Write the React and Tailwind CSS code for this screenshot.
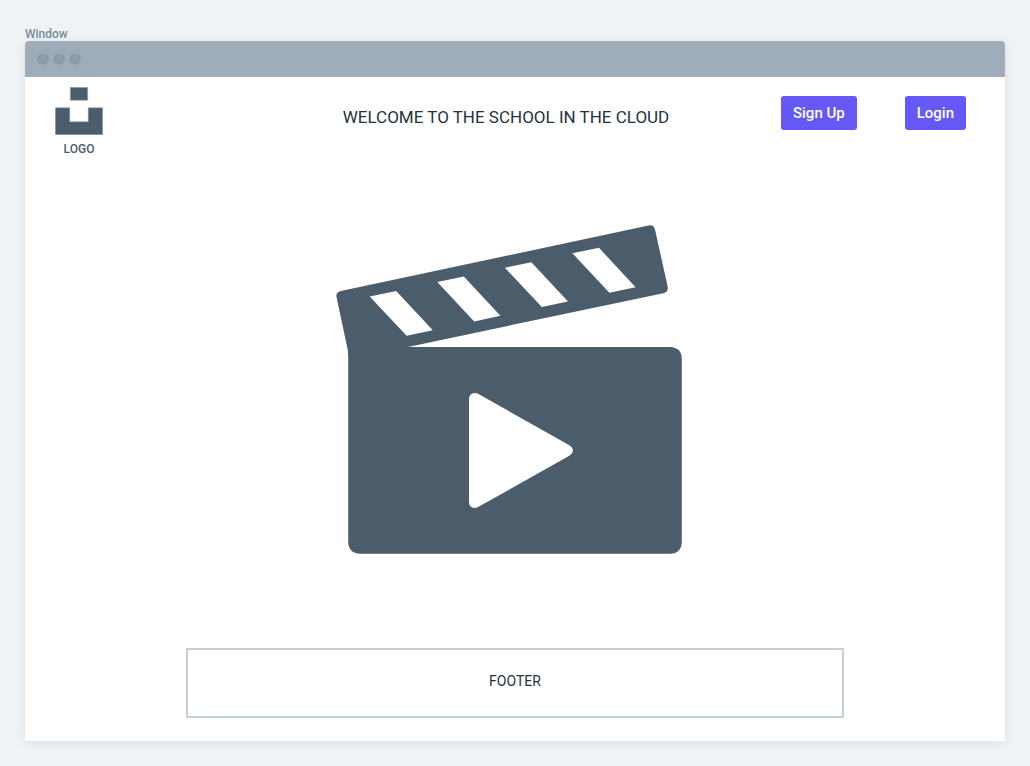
function Logo() {
  return (
    <a href="#home" className="flex w-[66px] flex-col items-center gap-1.5 text-xs leading-4 font-medium text-[#4b5d6b]">
      <svg viewBox="0 0 48 48" className="size-12" fill="#4b5d6b" stroke="#9fadb9" strokeWidth="0.6" aria-hidden="true">
        <path d="M15.3 .3h17.4v13H15.3z" />
        <path d="M.3 20.7h14.5v14h18.4v-14h14.5v27H.3z" />
      </svg>
      <span>LOGO</span>
    </a>
  );
}

// Each stripe repeats the first one, shifted along the arm.
const STRIPES = [0, 1, 2, 3];

function Clapperboard() {
  return (
    <svg viewBox="336 225 358 329" className="w-[358px] max-w-full" fill="#4b5d6b" role="img" aria-label="Play video">
      <path d="M348.2 352 L336.6 297.5 Q335.3 292.4 340.8 291.1 L648.5 225.4 Q653.8 224.4 655 229.5 L667.7 286.8 Q668.4 292 663.3 293.2 L408 346.9 L408 356 H348.2z" />
      <path d="M348.2 347 H670 Q681.8 347.6 681.8 359 V542 Q681.3 553.5 670 553.8 H360 Q348.6 553.3 348.2 542z" />
      {STRIPES.map((n) => (
        <path
          key={n}
          fill="#fff"
          d="M369.7 296.4 L396.2 290.9 L432.8 330.2 L406.6 335.8z"
          transform={`translate(${n * 67.6} ${n * -14.35})`}
        />
      ))}
      <path
        fill="#fff"
        d="M469 399 Q469.2 393.3 474.5 393 Q476.5 393 478.5 394.1 L569.8 445.4 Q572.8 447.4 572.9 450.5 Q572.8 453.7 569.8 455.6 L478.5 506.8 Q476.5 508 474.5 508 Q469.2 507.7 469 502z"
      />
    </svg>
  );
}

function ActionButton({ children }) {
  return (
    <button
      type="button"
      className="h-[34px] cursor-pointer rounded-[3px] bg-[#6558f5] px-3 text-[15px] leading-5 font-medium whitespace-nowrap text-white"
    >
      {children}
    </button>
  );
}

export default function App() {
  return (
    <div className="flex min-h-screen flex-col bg-[#eff3f6] px-[25px] pt-[27px] pb-[25px] font-['Roboto',sans-serif]">
      <p className="text-xs leading-[14px] font-medium text-[#7b8b99]">Window</p>
      <div className="flex grow flex-col rounded-t bg-white shadow-[0_2px_12px_rgba(0,0,0,0.08)]">
        <div className="flex h-9 items-center gap-1 rounded-t bg-[#9eadb9] px-3">
          <span className="size-3 rounded-full bg-[#8e9dab]" />
          <span className="size-3 rounded-full bg-[#8e9dab]" />
          <span className="size-3 rounded-full bg-[#8e9dab]" />
        </div>
        <header className="grid grid-cols-[1fr_auto_1fr] items-center pt-2.5 pr-[39px] pl-[21px]">
          <Logo />
          <h1 className="pb-2.5 text-center text-[17px] leading-6 text-[#24343f]">
            WELCOME TO THE SCHOOL IN THE CLOUD
          </h1>
          <div className="flex justify-end gap-12 pb-[18px]">
            <ActionButton>Sign Up</ActionButton>
            <ActionButton>Login</ActionButton>
          </div>
        </header>
        <main className="flex grow items-center justify-center px-6 pt-2 pb-[34px]">
          <Clapperboard />
        </main>
        <footer className="mx-auto mb-[23px] flex h-[70px] w-full max-w-[658px] items-center justify-center border-2 border-[#c3cfd9] pb-1 text-[14px] leading-5 text-[#24343f]">
          FOOTER
        </footer>
      </div>
    </div>
  );
}
